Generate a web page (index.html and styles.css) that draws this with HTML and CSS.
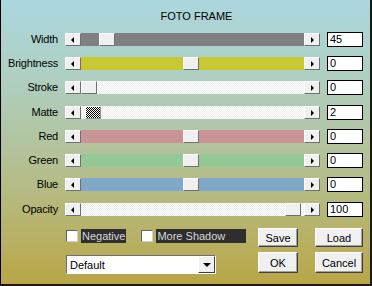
FILE: index.html
```html
<!DOCTYPE html>
<html lang="en">
<head>
    <meta charset="UTF-8">
    <title>Foto Frame</title>
    <link rel="stylesheet" href="styles.css">
</head>
<body>
    <div class="window">
        <div class="title">FOTO FRAME</div>

        <div class="rows">
            <div class="row">
                <span class="label">Width</span>
                <div class="scroll">
                    <span class="btn left"></span>
                    <div class="track grey"><span class="thumb" style="left: 18px"></span></div>
                    <span class="btn right"></span>
                </div>
                <div class="value">45</div>
            </div>
            <div class="row">
                <span class="label">Brightness</span>
                <div class="scroll">
                    <span class="btn left"></span>
                    <div class="track yellow"><span class="thumb" style="left: 102px"></span></div>
                    <span class="btn right"></span>
                </div>
                <div class="value">0</div>
            </div>
            <div class="row">
                <span class="label">Stroke</span>
                <div class="scroll">
                    <span class="btn left"></span>
                    <div class="track white"><span class="thumb" style="left: 0"></span></div>
                    <span class="btn right"></span>
                </div>
                <div class="value">0</div>
            </div>
            <div class="row">
                <span class="label">Matte</span>
                <div class="scroll">
                    <span class="btn left"></span>
                    <div class="track white"><span class="thumb checker" style="left: 4px"></span></div>
                    <span class="btn right"></span>
                </div>
                <div class="value">2</div>
            </div>
            <div class="row">
                <span class="label">Red</span>
                <div class="scroll">
                    <span class="btn left"></span>
                    <div class="track red"><span class="thumb" style="left: 102px"></span></div>
                    <span class="btn right"></span>
                </div>
                <div class="value">0</div>
            </div>
            <div class="row">
                <span class="label">Green</span>
                <div class="scroll">
                    <span class="btn left"></span>
                    <div class="track green"><span class="thumb" style="left: 102px"></span></div>
                    <span class="btn right"></span>
                </div>
                <div class="value">0</div>
            </div>
            <div class="row">
                <span class="label">Blue</span>
                <div class="scroll">
                    <span class="btn left"></span>
                    <div class="track blue"><span class="thumb" style="left: 102px"></span></div>
                    <span class="btn right"></span>
                </div>
                <div class="value">0</div>
            </div>
            <div class="row">
                <span class="label">Opacity</span>
                <div class="scroll">
                    <span class="btn left"></span>
                    <div class="track white"><span class="thumb" style="left: 204px"></span></div>
                    <span class="btn right"></span>
                </div>
                <div class="value">100</div>
            </div>
        </div>

        <div class="bottom">
            <div class="options">
                <div class="checks">
                    <label class="check"><span class="box"></span><span class="text">Negative</span></label>
                    <label class="check"><span class="box"></span><span class="text">More Shadow</span></label>
                </div>
                <div class="select">
                    <span class="select-text">Default</span>
                    <span class="select-btn"></span>
                </div>
            </div>
            <div class="buttons">
                <button>Save</button>
                <button>Load</button>
                <button>OK</button>
                <button>Cancel</button>
            </div>
        </div>
    </div>
</body>
</html>
```

FILE: styles.css
```css
body {
    margin: 0;
    font-family: "Liberation Sans", Arial, sans-serif;
    font-size: 11px;
    color: #000;
}

.window {
    width: 372px;
    height: 286px;
    box-sizing: border-box;
    border-left: 1px solid #000;
    border-right: 2px solid #1a1a10;
    border-bottom: 2px solid #1a1a10;
    background: linear-gradient(to bottom, #acd6de 0%, #aed0c4 25%, #b2c4a0 50%, #b6b87a 72%, #b9a646 100%);
}

.title {
    padding: 9px 0 0 22px;
    height: 14px;
    text-align: center;
    line-height: 14px;
}

/* filas de deslizadores */
.rows {
    margin-top: 4px;
}

.row {
    display: grid;
    grid-template-columns: 57px 255px 36px;
    column-gap: 7px;
    align-items: center;
    height: 24.3px;
}

.label {
    text-align: right;
    line-height: 13px;
    letter-spacing: -0.2px;
    white-space: nowrap;
}

.scroll {
    display: flex;
    height: 13px;
}

.btn,
.thumb {
    display: block;
    width: 16px;
    height: 13px;
    box-sizing: border-box;
    background-color: #f0f0f0;
    border-top: 1px solid #fff;
    border-left: 1px solid #fff;
    border-right: 1px solid #707070;
    border-bottom: 1px solid #707070;
    position: relative;
}

.btn::after {
    content: "";
    position: absolute;
    top: 3px;
    width: 0;
    height: 0;
    border-top: 3px solid transparent;
    border-bottom: 3px solid transparent;
}

.btn.left::after {
    left: 5px;
    border-right: 3px solid #000;
}

.btn.right::after {
    left: 6px;
    border-left: 3px solid #000;
}

.track {
    flex: 1;
    position: relative;
}

.thumb {
    position: absolute;
    top: 0;
}

.thumb.checker {
    background: repeating-conic-gradient(#000 0 25%, #fff 0 50%) 0 0 / 2px 2px;
    border-color: #fff #909090 #909090 #fff;
}

.grey { background: #808080; }
.yellow { background: #c8c832; }
.red { background: #c89496; }
.green { background: #94c894; }
.blue { background: #80a8c8; }
.white { background: repeating-conic-gradient(#fff 0 25%, #ececec 0 50%) 0 0 / 2px 2px; }

.value {
    height: 15px;
    box-sizing: border-box;
    background: #fff;
    border: 1px solid #000;
    padding-left: 2px;
    line-height: 13px;
}

/* zona inferior */
.bottom {
    display: flex;
    padding-left: 65px;
    margin-top: 7px;
}

.options {
    width: 192px;
}

.checks {
    display: flex;
    gap: 15px;
    height: 14px;
    margin-top: 1px;
}

.check {
    display: flex;
    align-items: center;
    gap: 3px;
}

.box {
    width: 12px;
    height: 12px;
    box-sizing: border-box;
    background: #fff;
    border-top: 1px solid #606060;
    border-left: 1px solid #606060;
    border-right: 1px solid #d0d0d0;
    border-bottom: 1px solid #d0d0d0;
}

.text {
    background: #2e2e2e;
    color: #d8d8d8;
    padding: 0 1px;
    line-height: 14px;
}

.check:last-child .text {
    width: 88px;
}

.select {
    margin-top: 12px;
    width: 150px;
    height: 19px;
    box-sizing: border-box;
    background: #fff;
    border-top: 1px solid #707070;
    border-left: 1px solid #707070;
    border-right: 1px solid #fff;
    border-bottom: 1px solid #fff;
    display: flex;
    align-items: center;
}

.select-text {
    flex: 1;
    padding-left: 3px;
}

.select-btn {
    width: 17px;
    height: 17px;
    box-sizing: border-box;
    background: #f0f0f0;
    border-top: 1px solid #fff;
    border-left: 1px solid #fff;
    border-right: 1px solid #404040;
    border-bottom: 1px solid #404040;
    position: relative;
}

.select-btn::after {
    content: "";
    position: absolute;
    left: 4px;
    top: 6px;
    border-left: 4px solid transparent;
    border-right: 4px solid transparent;
    border-top: 4px solid #000;
}

.buttons {
    display: grid;
    grid-template-columns: 40px 48px;
    grid-template-rows: 19px 21px;
    column-gap: 17px;
    row-gap: 5px;
}

button {
    font-family: "Liberation Sans", Arial, sans-serif;
    font-size: 11px;
    color: #000;
    padding: 0;
    background: #f0f0f0;
    border-top: 1px solid #fff;
    border-left: 1px solid #fff;
    border-right: 1px solid #404040;
    border-bottom: 1px solid #404040;
    box-shadow: inset -1px -1px 0 #a0a0a0;
}
```
